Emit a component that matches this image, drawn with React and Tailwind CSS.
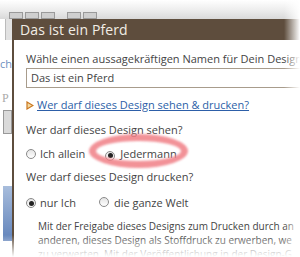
import React from "react";

function Radio({ checked }) {
  return (
    <span className="inline-flex h-[10px] w-[10px] items-center justify-center rounded-full border border-[#8a8a8a] bg-gradient-to-b from-[#e4e4e4] to-white">
      {checked && <span className="h-[5px] w-[5px] rounded-full bg-[#222]" />}
    </span>
  );
}

export default function App() {
  return (
    <div className="relative h-[257px] w-[300px] overflow-hidden bg-white" style={{ fontFamily: '"Open Sans", sans-serif' }}>
      {/* top band (page behind) */}
      <div className="h-[19px] bg-gradient-to-b from-white via-[#eeeeee] to-[#d9d9d9] flex items-end gap-[2px] pl-[9px]">
        <div className="h-[7px] w-[14px] border border-[#9a9a9a] bg-[#cfcfcf]" />
        <div className="h-[7px] w-[14px] border border-[#9a9a9a] bg-[#cfcfcf]" />
        <div className="h-[7px] w-[14px] border border-[#9a9a9a] bg-[#cfcfcf]" />
        <div className="ml-[10px] h-[7px] w-[14px] border border-[#9a9a9a] bg-[#cfcfcf]" />
        <div className="h-[7px] w-[14px] border border-[#9a9a9a] bg-[#cfcfcf]" />
      </div>
      <div className="flex">
        {/* left strip: page behind dialog */}
        <div className="relative w-[12px] shrink-0 overflow-hidden">
          <div className="h-[21px] bg-[#e2e2e2] border-l border-[#bbbbbb] ml-[5px]" />
          <div className="mt-[18px] text-[11px] leading-[12px] text-[#6d8fbf]">ch</div>
          <div className="mt-[22px] text-[12px] leading-[12px] text-[#aaa] ml-[2px]" style={{ fontFamily: '"Liberation Serif", serif' }}>P</div>
          <div className="mt-[6px] ml-[3px] h-[24px] w-[9px] border border-[#999] bg-[#dadada]" />
          <div className="mt-[52px] ml-[3px] h-[55px] w-[9px] bg-gradient-to-b from-[#a8bddc] to-[#6283ba]" />
        </div>
        {/* dialog */}
        <div className="flex-1 border-l-2 border-[#5e4d3d]">
          <div className="h-[21px] -ml-[2px] bg-[#5e4d3d] pl-[8px] text-[14px] leading-[21px] tracking-[0.1px] text-[#f2ede6]">Das ist ein Pferd</div>
          <div className="pl-[12px] text-[#444]">
            <div className="mt-[12px] text-[11px] leading-[14px] whitespace-nowrap">Wähle einen aussagekräftigen Namen für Dein Design</div>
            <div className="mt-[2px] h-[20px] border border-[#a89c8c] pl-[4px] text-[11px] leading-[18px] whitespace-nowrap">Das ist ein Pferd</div>
            <div className="mt-[10px] flex items-center gap-[3px] text-[11px] leading-[14px] whitespace-nowrap">
              <svg width="8" height="9" viewBox="0 0 8 9"><path d="M1 1 L7 4.5 L1 8 Z" fill="#f5d9a0" stroke="#c9761e" strokeWidth="1.2" /></svg>
              <span className="text-[#2d5fa8] underline">Wer darf dieses Design sehen &amp; drucken?</span>
            </div>
            <div className="mt-[11px] text-[11px] leading-[14px] whitespace-nowrap">Wer darf dieses Design sehen?</div>
            <div className="mt-[10px] flex items-center text-[11px] leading-[14px] whitespace-nowrap">
              <Radio />
              <span className="ml-[4px]">Ich allein</span>
              <span className="ml-[20px]"><Radio checked /></span>
              <span className="ml-[5px]">Jedermann</span>
            </div>
            <div className="mt-[9px] text-[11px] leading-[14px] whitespace-nowrap">Wer darf dieses Design drucken?</div>
            <div className="mt-[12px] flex items-center text-[11px] leading-[14px] whitespace-nowrap">
              <Radio checked />
              <span className="ml-[4px]">nur Ich</span>
              <span className="ml-[23px]"><Radio /></span>
              <span className="ml-[5px]">die ganze Welt</span>
            </div>
            <div className="mt-[9px] pl-[12px] text-[10px] leading-[14px] text-[#444] whitespace-nowrap">
              <div>Mit der Freigabe dieses Designs zum Drucken durch an</div>
              <div>anderen, dieses Design als Stoffdruck zu erwerben, we</div>
              <div>zu verwerten. Mit der Veröffentlichung in der Design-G</div>
            </div>
          </div>
        </div>
      </div>
      {/* red highlight */}
      <div className="pointer-events-none absolute left-[89px] top-[134px] h-[34px] w-[99px] rounded-[50%] border-[7px] border-[#f07f86] opacity-85 blur-[1px]" />
      {/* edge fades */}
      <div className="pointer-events-none absolute right-0 top-0 h-full w-[16px] bg-gradient-to-r from-transparent to-white" />
      <div className="pointer-events-none absolute bottom-0 left-0 h-[22px] w-full bg-gradient-to-b from-transparent to-white" />
    </div>
  );
}
